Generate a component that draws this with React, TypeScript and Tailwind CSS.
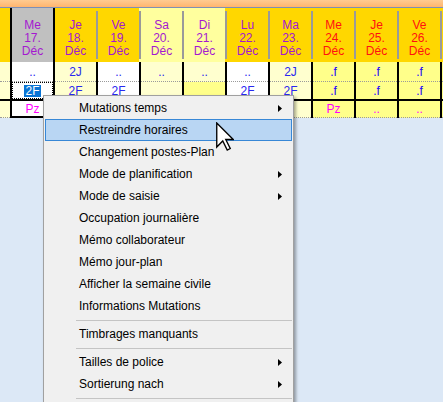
import React from 'react';

type Bg = 'w' | 'p' | 'y';

interface Day {
  d: string;
  n: string;
  head: 'sel' | 'gold' | 'we';
  red?: boolean;
  rows: [string, string, string];
  bg: [Bg, Bg, Bg];
}

// row 3 cells under the context menu are left empty
const DAYS: Day[] = [
  { d: 'Me', n: '17.', head: 'sel', rows: ['..', '2F', 'Pz'], bg: ['w', 'w', 'w'] },
  { d: 'Je', n: '18.', head: 'gold', rows: ['2J', '2F', ''], bg: ['p', 'p', 'p'] },
  { d: 'Ve', n: '19.', head: 'gold', rows: ['..', '2F', ''], bg: ['w', 'w', 'w'] },
  { d: 'Sa', n: '20.', head: 'we', rows: ['..', '', ''], bg: ['p', 'p', 'p'] },
  { d: 'Di', n: '21.', head: 'we', rows: ['..', '', ''], bg: ['p', 'y', 'p'] },
  { d: 'Lu', n: '22.', head: 'gold', rows: ['..', '2F', ''], bg: ['w', 'w', 'w'] },
  { d: 'Ma', n: '23.', head: 'gold', rows: ['2J', '2F', '..'], bg: ['p', 'p', 'p'] },
  { d: 'Me', n: '24.', head: 'gold', red: true, rows: ['.f', '.f', 'Pz'], bg: ['y', 'y', 'y'] },
  { d: 'Je', n: '25.', head: 'gold', red: true, rows: ['.f', '.f', '..'], bg: ['y', 'y', 'y'] },
  { d: 'Ve', n: '26.', head: 'gold', red: true, rows: ['.f', '.f', '..'], bg: ['y', 'y', 'y'] },
];

const headBg = { sel: 'bg-[#c0c0c0]', gold: 'bg-[#ffd700]', we: 'bg-[#ffff9e]' };
const cellBg: Record<Bg, string> = { w: 'bg-white', p: 'bg-[#ffffcf]', y: 'bg-[#ffff8a]' };

const MENU: ({ label: string; sub?: boolean; hot?: boolean } | 'sep')[] = [
  { label: 'Mutations temps', sub: true },
  { label: 'Restreindre horaires', hot: true },
  { label: 'Changement postes-Plan' },
  { label: 'Mode de planification', sub: true },
  { label: 'Mode de saisie', sub: true },
  { label: 'Occupation journalière' },
  { label: 'Mémo collaborateur' },
  { label: 'Mémo jour-plan' },
  { label: 'Afficher la semaine civile' },
  { label: 'Informations Mutations' },
  'sep',
  { label: 'Timbrages manquants' },
  'sep',
  { label: 'Tailles de police', sub: true },
  { label: 'Sortierung nach', sub: true },
  'sep',
];

const SubArrow = () => (
  <svg width="4" height="7" viewBox="0 0 4 7" className="shrink-0">
    <path d="M0 0 L4 3.5 L0 7 Z" fill="#000" />
  </svg>
);

const Cursor = () => (
  <svg width="18" height="29" viewBox="0 0 12 19" className="absolute left-[216px] top-[122px]">
    <path
      d="M0.5 0.5 L0.5 16.5 L4.5 12.5 L7.5 18.5 L9.5 17.5 L6.5 11.5 L11.5 11.5 Z"
      fill="#fff"
      stroke="#000"
      strokeWidth="0.9"
      strokeLinejoin="miter"
    />
  </svg>
);

const textColor = (txt: string, row: number) => {
  if (row === 2) return 'text-[#ff00ff]';
  if (txt === '.f') return 'text-[#2000ff]';
  return 'text-[#2828f0]';
};

const App: React.FC = () => {
  return (
    <div
      className="relative w-[443px] h-[402px] overflow-hidden bg-[#dce8f6] select-none text-[12px]"
      style={{ fontFamily: '"Liberation Sans", Arial, sans-serif' }}
    >
      {/* title strip */}
      <div className="h-[7px] bg-gradient-to-b from-[#ffcb91] to-[#ffb56e]" />
      <div className="h-[1px] bg-[#7d8fb6]" />

      {/* header */}
      <div className="flex h-[54px]">
        <div className="w-[10px] bg-[#ffd700]" />
        {DAYS.map((day, i) => {
          const black = day.head === 'sel' || DAYS[i - 1]?.head === 'sel';
          return (
            <React.Fragment key={i}>
              {black ? (
                <div className="w-[2px] bg-black" />
              ) : (
                <div className={`w-[2px] flex items-center ${headBg[day.head]}`}>
                  <div className="w-[2px] h-[48px] bg-[#9a9a9a]" />
                </div>
              )}
              <div
                className={`w-[41px] flex flex-col items-center pt-[11px] leading-[13px] ${headBg[day.head]} ${
                  day.red ? 'text-[#ff1010]' : 'text-[#a418d0]'
                }`}
              >
                <span>{day.d}</span>
                <span>{day.n}</span>
                <span>Déc</span>
              </div>
            </React.Fragment>
          );
        })}
        <div className="w-[2px] flex items-center bg-[#ffd700]">
          <div className="w-[2px] h-[48px] bg-[#9a9a9a]" />
        </div>
        <div className="w-[1px] bg-[#ffd700]" />
      </div>

      {/* body rows */}
      {[0, 1, 2].map(row => (
        <React.Fragment key={row}>
          <div className={`flex ${row === 0 ? 'h-[20px]' : 'h-[17px]'}`}>
            <div className={`w-[10px] bg-[#ffffcf] ${row !== 1 ? 'border-b border-dotted border-[#9a9a9a]' : ''}`} />
            {DAYS.map((day, i) => {
              const sel = day.head === 'sel';
              const txt = day.rows[row];
              let cls = `w-[41px] flex items-center justify-center ${cellBg[day.bg[row]]}`;
              if (row !== 1) cls += sel && row === 2 ? ' border-b-2 border-black' : ' border-b border-dotted border-[#9a9a9a]';
              return (
                <React.Fragment key={i}>
                  <div className="w-[2px] bg-black" />
                  <div className={cls}>
                    {sel && row === 1 ? (
                      <div className="w-full h-full border border-dotted border-black flex items-center justify-center">
                        <span className="bg-[#0a74d4] text-white px-[1px] leading-[12px]">{txt}</span>
                      </div>
                    ) : (
                      txt && <span className={textColor(txt, row)}>{txt}</span>
                    )}
                  </div>
                </React.Fragment>
              );
            })}
            <div className="w-[2px] bg-black" />
            <div className={`w-[1px] bg-[#ffff8a] ${row !== 1 ? 'border-b border-dotted border-[#9a9a9a]' : ''}`} />
          </div>
          {row === 1 && <div className="h-[2px] bg-black" />}
        </React.Fragment>
      ))}

      {/* context menu */}
      <div className="absolute left-[43px] top-[95px] w-[251px] bg-[#f0f0f0] border border-[#a0a0a0] p-[1px] shadow-[2px_2px_3px_rgba(0,0,0,0.35)] text-black">
        {MENU.map((item, i) =>
          item === 'sep' ? (
            <div key={i} className="h-[6px] pt-[3px] pl-[31px]">
              <div className="h-[1px] bg-[#c4c4c4]" />
            </div>
          ) : (
            <div
              key={i}
              className={`h-[22px] flex items-center justify-between pl-[33px] pr-[9px] border ${
                item.hot ? 'bg-[#b9d6f3] border-[#3787d6]' : 'border-transparent'
              }`}
            >
              <span className="leading-[20px]">{item.label}</span>
              {item.sub && <SubArrow />}
            </div>
          )
        )}
      </div>

      <Cursor />
    </div>
  );
};

export default App;
